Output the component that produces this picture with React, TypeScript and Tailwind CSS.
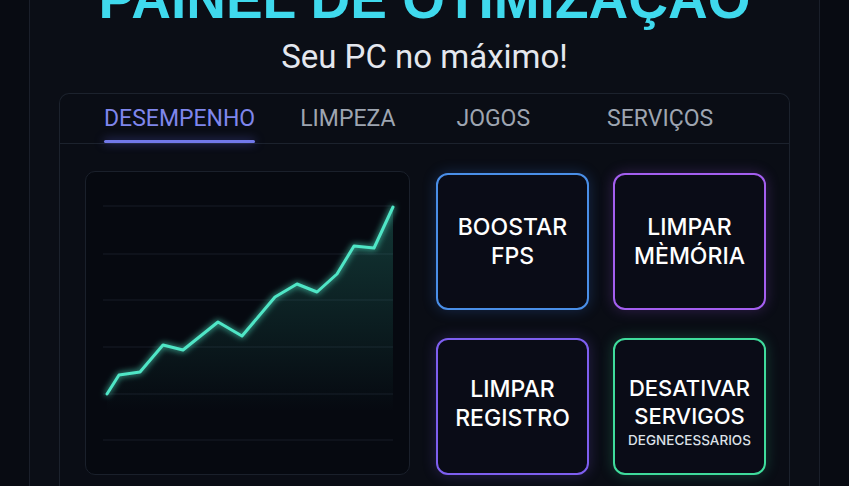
import React from 'react';

const tabs = [
  { label: 'DESEMPENHO', ml: 'ml-[44px]' },
  { label: 'LIMPEZA', ml: 'ml-[45px]' },
  { label: 'JOGOS', ml: 'ml-[61px]' },
  { label: 'SERVIÇOS', ml: 'ml-[77px]' },
];

const points: [number, number][] = [
  [21, 222],
  [33, 203],
  [54, 200],
  [77, 173],
  [97, 178],
  [132, 150],
  [156, 164],
  [189, 125],
  [211, 112],
  [231, 120],
  [251, 102],
  [268, 74],
  [288, 76],
  [307, 35],
];

function Chart() {
  const line = points.map(([x, y]) => `${x},${y}`).join(' ');
  const area = `21,240 ${line} 307,240`;
  const gridY = [34, 82, 128, 175, 222, 268];

  return (
    <div className="w-[325px] h-[304px] shrink-0 rounded-[10px] border border-[#1a202b] bg-[#060910]">
      <svg width="323" height="302" viewBox="0 0 323 302">
        <defs>
          <linearGradient id="fill" x1="0" y1="0" x2="0" y2="1">
            <stop offset="0%" stopColor="#3fe0bd" stopOpacity="0.22" />
            <stop offset="100%" stopColor="#3fe0bd" stopOpacity="0" />
          </linearGradient>
          <filter id="glow" x="-20%" y="-20%" width="140%" height="140%">
            <feGaussianBlur stdDeviation="3" result="b" />
            <feMerge>
              <feMergeNode in="b" />
              <feMergeNode in="SourceGraphic" />
            </feMerge>
          </filter>
        </defs>
        {gridY.map((y) => (
          <line key={y} x1="17" x2="307" y1={y} y2={y} stroke="#161c27" strokeWidth="1" />
        ))}
        <polygon points={area} fill="url(#fill)" />
        <polyline
          points={line}
          fill="none"
          stroke="#4fe6c6"
          strokeWidth="3"
          strokeLinejoin="round"
          strokeLinecap="round"
          filter="url(#glow)"
        />
      </svg>
    </div>
  );
}

function ActionButton({
  border,
  children,
}: {
  border: string;
  children: React.ReactNode;
}) {
  return (
    <button
      type="button"
      className={`h-[137px] rounded-[12px] border-2 bg-[#0a0c17] flex flex-col items-center justify-center text-center text-white ${border}`}
    >
      {children}
    </button>
  );
}

export default function App() {
  return (
    <div className="h-[486px] w-full overflow-hidden bg-[#080b12]">
      <div className="ml-[29px] w-[791px] h-full border-x border-[#1a1f2a] bg-[#0b0e16] flex flex-col items-center">
        <h1 className="mt-[-28px] text-[55px] leading-none font-bold text-[#3fd9ed] font-['Liberation_Sans',sans-serif] whitespace-nowrap">
          PAINEL DE OTIMIZAÇÃO
        </h1>
        <p className="mt-[13px] text-[33px] leading-none text-[#e4e7ee] font-['Roboto',sans-serif]">
          Seu PC no máximo!
        </p>

        <div className="mt-[20px] w-[731px] flex-1 rounded-t-[10px] border border-b-0 border-[#1c222d] bg-[#0a0d15]">
          <div className="flex h-[50px] border-b border-[#1c222d] font-['Roboto',sans-serif] text-[23px] leading-none">
            {tabs.map((tab, i) => (
              <div key={tab.label} className={`relative h-full pt-[13px] ${tab.ml}`}>
                <span className={i === 0 ? 'text-[#7f86ec]' : 'text-[#9ea5b1]'}>{tab.label}</span>
                {i === 0 && (
                  <div className="absolute left-0 right-0 bottom-0 h-[3px] rounded-full bg-[#7279ea] shadow-[0_0_10px_rgba(99,102,241,0.6)]" />
                )}
              </div>
            ))}
          </div>

          <div className="flex pl-[25px] pt-[27px] gap-[26px]">
            <Chart />
            <div className="mt-[2px] grid grid-cols-[153px_153px] gap-x-[24px] gap-y-[28px] font-['Inter',sans-serif] font-medium">
              <ActionButton border="border-[#4a8fe8] shadow-[0_0_14px_rgba(59,130,246,0.25)]">
                <span className="text-[23px] leading-[29px]">BOOSTAR</span>
                <span className="text-[23px] leading-[29px]">FPS</span>
              </ActionButton>
              <ActionButton border="border-[#a45ff0] shadow-[0_0_14px_rgba(168,85,247,0.25)]">
                <span className="text-[23px] leading-[29px]">LIMPAR</span>
                <span className="text-[23px] leading-[29px]">MÈMÓRIA</span>
              </ActionButton>
              <ActionButton border="border-[#7e5ff0] shadow-[0_0_14px_rgba(124,92,240,0.25)]">
                <div className="mb-[5px] flex flex-col items-center">
                  <span className="text-[23px] leading-[29px]">LIMPAR</span>
                  <span className="text-[23px] leading-[29px]">REGISTRO</span>
                </div>
              </ActionButton>
              <ActionButton border="border-[#3fdc9c] shadow-[0_0_14px_rgba(52,211,153,0.25)]">
                <div className="pt-[10px] flex flex-col items-center">
                  <span className="text-[22px] leading-[28px]">DESATIVAR</span>
                  <span className="text-[22px] leading-[28px]">SERVIGOS</span>
                  <span className="text-[13.5px] leading-[20px] text-[#dde1e8]">DEGNECESSARIOS</span>
                </div>
              </ActionButton>
            </div>
          </div>
        </div>
      </div>
    </div>
  );
}
